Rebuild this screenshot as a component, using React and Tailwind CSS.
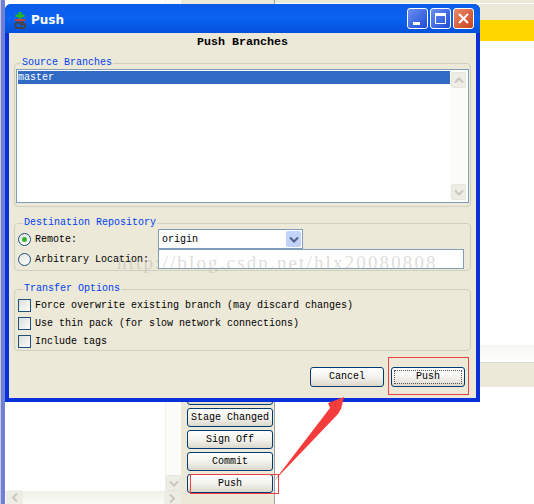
const mono = "font-['Liberation_Mono',monospace]";

function ScrollBtn({ dir, className = '' }) {
  return (
    <div className={`flex h-[16px] w-[15px] items-center justify-center rounded-[2px] border border-[#e6e6df] bg-[#eeede5] ${className}`}>
      <svg width="10" height="7" viewBox="0 0 10 7">
        <path d={dir === 'up' ? 'M1 5.5L5 1.5L9 5.5' : 'M1 1.5L5 5.5L9 1.5'} fill="none" stroke="#c9c7ba" strokeWidth="2" />
      </svg>
    </div>
  );
}

function XpButton({ label, focus, className = '' }) {
  return (
    <button className={`relative block rounded-[3px] border border-[#003c74] bg-gradient-to-b from-white via-[#f3f3ee] to-[#dcd8cc] text-center text-[10px] leading-none text-black ${mono} ${className}`}>
      {focus && <span className="absolute inset-[2px] border border-dotted border-[#555]" />}
      {label}
    </button>
  );
}

function Group({ title, className = '', children }) {
  return (
    <fieldset className={`rounded-[4px] border border-[#d0d0bf] ${className}`}>
      <legend className={`ml-[5px] px-[1px] text-[10px] leading-[12px] text-[#0040f0] ${mono}`}>{title}</legend>
      {children}
    </fieldset>
  );
}

function Check({ label }) {
  return (
    <div className="flex h-[18px] items-center gap-[4px]">
      <span className="h-[13px] w-[13px] border border-[#1c5180] bg-gradient-to-br from-[#dcdcd7] to-white" />
      <span className={`text-[10px] text-black ${mono}`}>{label}</span>
    </div>
  );
}

function Radio({ checked, label }) {
  return (
    <div className="flex h-[20px] w-[140px] items-center gap-[4px]">
      <span className="flex h-[13px] w-[13px] items-center justify-center rounded-full border border-[#1c5180] bg-gradient-to-br from-[#e4e4de] to-white">
        {checked && <span className="h-[5px] w-[5px] rounded-full bg-[#2fb52f]" />}
      </span>
      <span className={`text-[10px] text-black ${mono}`}>{label}</span>
    </div>
  );
}

function TitleBtn({ red, children }) {
  return (
    <div className={`flex h-[21px] w-[21px] items-center justify-center rounded-[3px] border border-white ${red ? 'bg-gradient-to-br from-[#e88a6a] to-[#c9401a]' : 'bg-gradient-to-br from-[#6c8ff0] to-[#1f48d8]'}`}>
      {children}
    </div>
  );
}

function Dialog() {
  return (
    <div className="absolute left-[5px] top-[4px] h-[398px] w-[475px] rounded-t-[6px] bg-[#0831d9]">
      {/* title bar */}
      <div className="flex h-[29px] items-center justify-between rounded-t-[6px] bg-gradient-to-b from-[#0a5be8] via-[#0a63f0] to-[#0450dc] pl-[9px] pr-[6px]">
        <div className="flex items-center gap-[5px] pt-[3px]">
          <svg width="12" height="17" viewBox="0 0 12 17">
            <path d="M4.500 0h3v2.500h3v2.500h-3v1.500h-3v-1.500h-3v-2.500h3z" fill="#22b822" />
            <rect x="1" y="7" width="10" height="2" fill="#d04030" />
            <path d="M10 10.500H3L1.500 11.500v3.500L3 16h6.500L11 15v-2.500H6" fill="none" stroke="#444" strokeWidth="2" />
          </svg>
          <span className="font-['DejaVu_Sans',sans-serif] text-[12px] font-bold text-white">Push</span>
        </div>
        <div className="flex gap-[2px]">
          <TitleBtn><span className="mt-[10px] -ml-[3px] h-[3px] w-[7px] bg-white" /></TitleBtn>
          <TitleBtn><span className="h-[11px] w-[11px] border border-t-[3px] border-white" /></TitleBtn>
          <TitleBtn red>
            <svg width="13" height="13" viewBox="0 0 13 13"><path d="M2 2L11 11M11 2L2 11" stroke="#fff" strokeWidth="2" /></svg>
          </TitleBtn>
        </div>
      </div>

      {/* client area */}
      <div className="relative mx-[4px] h-[365px] bg-[#ece9d8] px-[5px]">
        <div className={`h-[24px] pt-[3px] text-center text-[11.67px] font-bold leading-[13px] text-black ${mono}`}>Push Branches</div>

        <Group title="Source Branches" className="h-[150px] px-[1px]">
          <div className="flex h-[134px] border border-[#7f9db9] bg-white p-[1px]">
            <div className="flex-1">
              <div className={`h-[13px] bg-[#316ac5] text-[10px] leading-[13px] text-white ${mono}`}>master</div>
            </div>
            <div className="flex w-[17px] flex-col justify-between bg-[#fbfbf8] py-[1px] pl-[1px]">
              <ScrollBtn dir="up" />
              <ScrollBtn dir="down" />
            </div>
          </div>
        </Group>

        <Group title="Destination Repository" className="mt-[10px] h-[54px] px-[3px]">
          <div className="flex">
            <Radio checked label="Remote:" />
            <div className="flex h-[20px] w-[145px] items-center border border-[#7f9db9] bg-white pl-[3px] pr-[1px]">
              <span className={`flex-1 text-[10px] text-black ${mono}`}>origin</span>
              <div className="flex h-[16px] w-[15px] items-center justify-center rounded-[2px] bg-[#c1d2fb]">
                <svg width="10" height="7" viewBox="0 0 10 7"><path d="M1 1.500L5 5.500L9 1.500" fill="none" stroke="#4d6185" strokeWidth="2" /></svg>
              </div>
            </div>
          </div>
          <div className="flex">
            <Radio label="Arbitrary Location:" />
            <div className="h-[20px] w-[306px] border border-[#7f9db9] bg-white" />
          </div>
        </Group>

        <Group title="Transfer Options" className="mt-[12px] h-[68px] px-[3px] pt-[1px]">
          <Check label="Force overwrite existing branch (may discard changes)" />
          <Check label="Use thin pack (for slow network connections)" />
          <Check label="Include tags" />
        </Group>

        <div className="mt-[16px] flex justify-end gap-[7px] pr-[6px]">
          <XpButton label="Cancel" className="h-[20px] w-[74px]" />
          <XpButton label="Push" focus className="h-[20px] w-[74px]" />
        </div>

        {/* csdn watermark */}
        <div className="absolute left-[108px] top-[219px] whitespace-nowrap font-['Liberation_Serif',serif] text-[19px] leading-[22px] tracking-[2.14px] text-[#a8a8a4]/40">http://blog.csdn.net/hlx20080808</div>
      </div>
    </div>
  );
}

export default function App() {
  return (
    <div className="relative h-[504px] w-[534px] overflow-hidden bg-white">
      {/* window behind the dialog */}
      <div className="flex h-full">
        <div className="w-[5px] border-l border-[#c8c8d8] bg-[#6f80d8]" />
        <div className="flex w-[176px] flex-col">
          <div className="flex flex-1">
            <div className="flex-1 bg-white" />
            <div className="flex w-[16px] flex-col justify-end border-l border-[#f0f0ea] bg-[#fbfbf8]">
              <ScrollBtn dir="down" />
            </div>
          </div>
          <div className="flex h-[13px] items-center justify-between bg-gradient-to-b from-[#f0f0e8] to-[#fbfbf8] pl-[2px] pr-[1px]">
            <ScrollBtn dir="up" className="-rotate-90" />
            <ScrollBtn dir="up" className="rotate-90" />
          </div>
        </div>
        <div className="flex w-[94px] flex-col items-center gap-[3px] border-r border-[#a0a0a0] bg-[#ece9d8] pt-[387px] pl-[6px] pr-[1px]">
          <XpButton label="" className="h-[18px] w-[86px]" />
          <XpButton label="Stage Changed" className="h-[19px] w-[86px]" />
          <XpButton label="Sign Off" className="h-[19px] w-[86px]" />
          <XpButton label="Commit" className="h-[19px] w-[86px]" />
          <XpButton label="Push" className="h-[19px] w-[86px]" />
        </div>
        <div className="flex flex-1 flex-col">
          <div className="h-[3px] bg-[#ece9d8]" />
          <div className="h-[1px] bg-white" />
          <div className="h-[16px] bg-[#ece9d8]" />
          <div className="h-[21px] bg-[#ffd700]" />
          <div className="h-[304px] bg-white" />
          <div className="h-[17px] bg-gradient-to-b from-[#f5f5f0] to-white" />
          <div className="h-[25px] border-t border-[#d8d8d0] bg-[#ece9d8]" />
          <div className="flex-1 bg-white" />
        </div>
      </div>

      <Dialog />

      {/* screenshot annotations */}
      <div className="absolute left-[388px] top-[357px] h-[38px] w-[81px] border border-[#f04040]" />
      <div className="absolute left-[190px] top-[474px] h-[20px] w-[89px] border border-[#f04040]" />
      <svg className="absolute left-[270px] top-[390px]" width="80" height="95" viewBox="0 0 80 95">
        <path d="M4 91L60 18L58 13L74 7L71 19L68 24Z" fill="#f53c3c" />
      </svg>
    </div>
  );
}
